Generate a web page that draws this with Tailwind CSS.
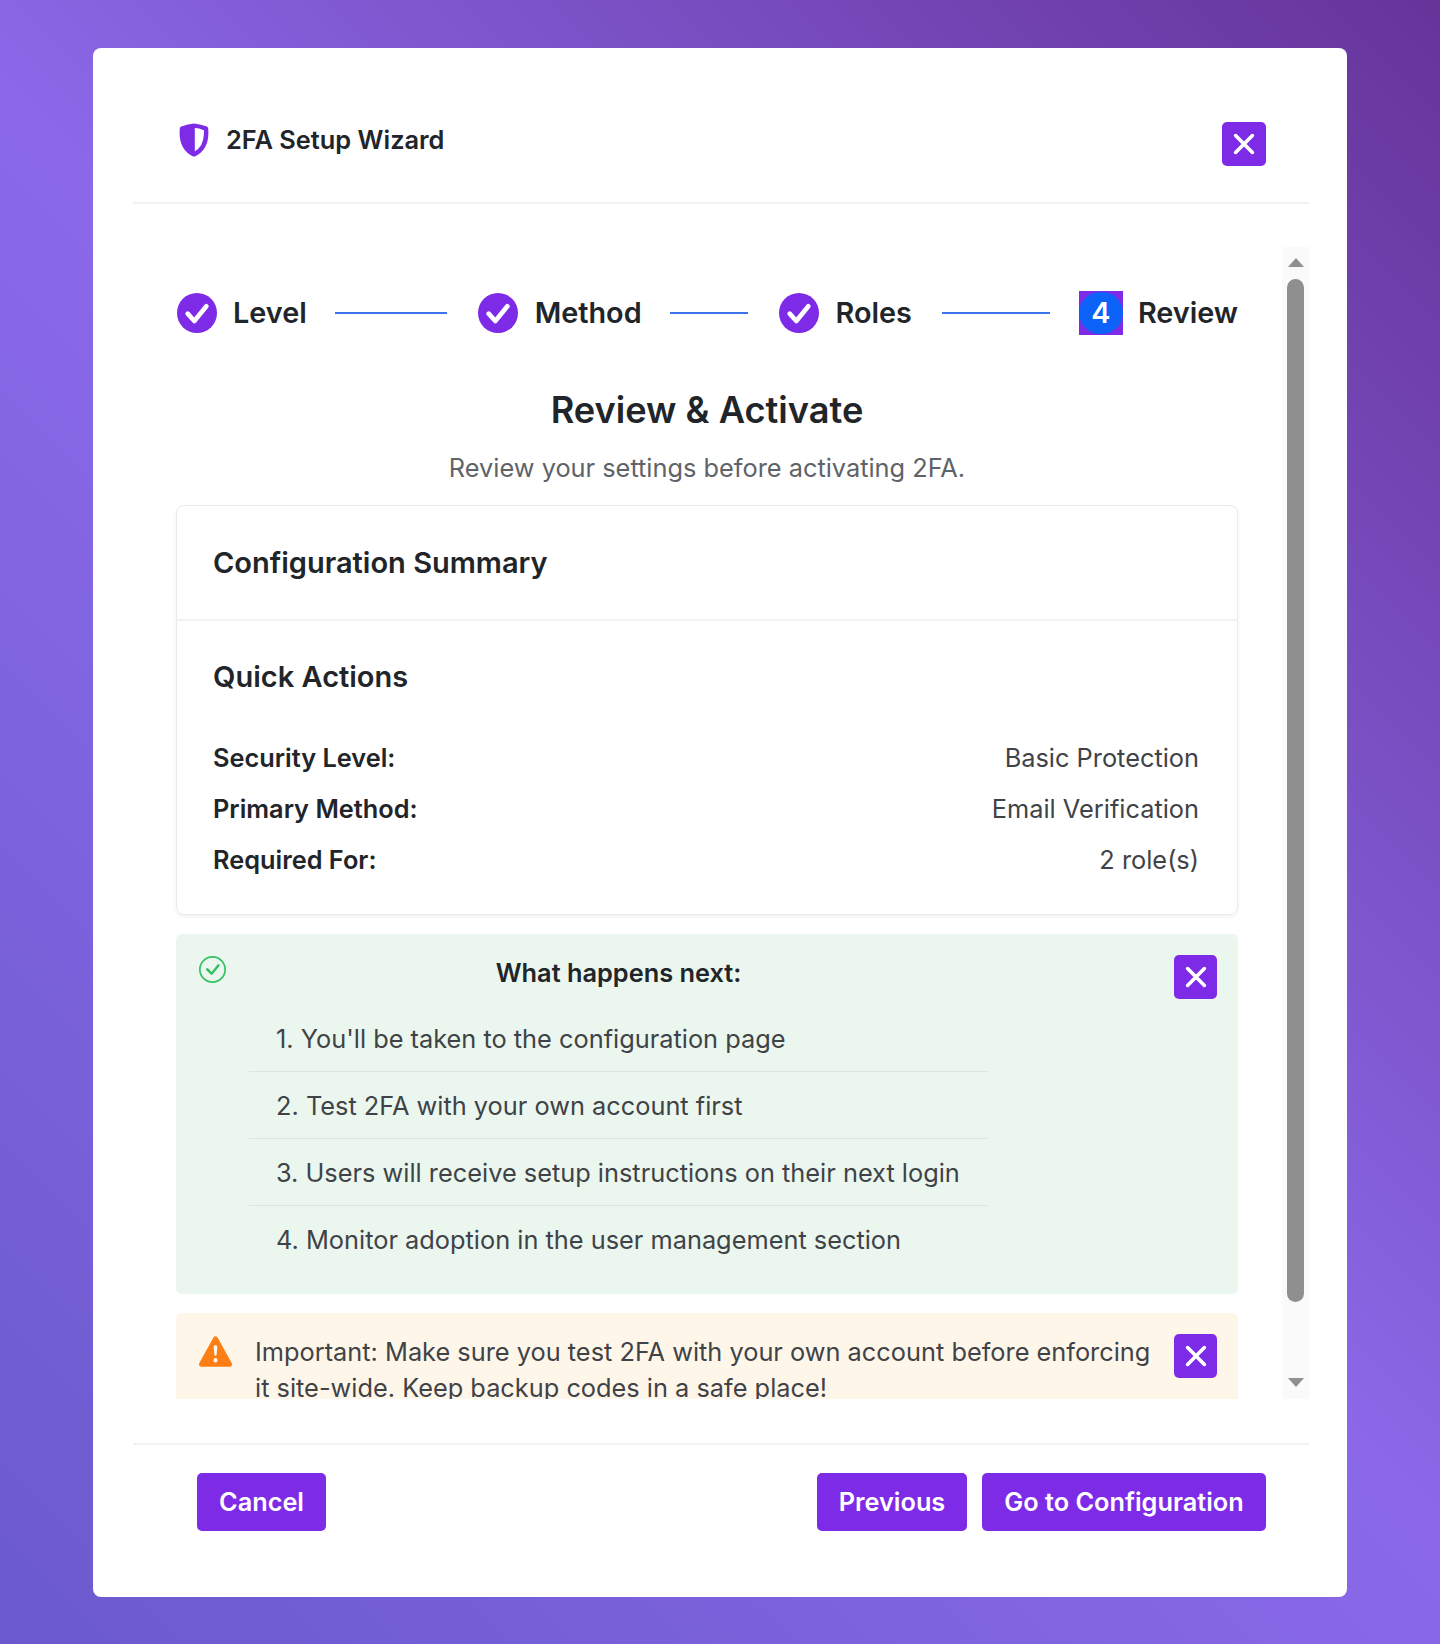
<!DOCTYPE html>
<html lang="en">
<head>
    <meta charset="UTF-8">
    <meta name="viewport" content="width=device-width, initial-scale=1.0">
    <title>2FA Setup Wizard</title>
    <script src="https://cdn.jsdelivr.net/npm/@tailwindcss/browser@4"></script>
</head>
<body class="h-[1644px] overflow-hidden font-['Inter',sans-serif] text-[#212529] bg-[linear-gradient(45deg,#6a5acd_0%,#8b69e9_50%,#663399_100%)]">

<div class="pt-[48px] w-[1254px] ml-[93px]">
    <div class="h-[1549px] bg-white rounded-[8px] pl-[40px] pr-[38px] flex flex-col">

        <!-- Header -->
        <div class="h-[156px] shrink-0 border-b-2 border-[#f1f2f3] flex items-start justify-between pl-[45px] pr-[43px] pt-[74px]">
            <div class="flex items-center gap-[16px]">
                <svg class="w-[32px] h-[34px]" viewBox="0 0 16 17" fill="none">
                    <path d="M8 1.300C6.200 1.400 3.800 2.100 2 2.800 1.500 8.500 2.800 13.300 8 15.700 13.200 13.300 14.500 8.500 14 2.800 12.200 2.100 9.800 1.400 8 1.300Z" stroke="#7e2be8" stroke-width="2.200" stroke-linejoin="round"/>
                    <path d="M8.400 1C6.200 1.100 3.400 1.900 1.800 2.600 1.200 8.500 2.600 13.600 8.400 16Z" fill="#7e2be8"/>
                </svg>
                <span class="text-[25.400px] leading-[36px] font-semibold">2FA Setup Wizard</span>
            </div>
            <button class="w-[44px] h-[44px] rounded-[5px] bg-[#7e2be8] flex items-center justify-center">
                <svg class="w-[24px] h-[24px]" viewBox="0 0 20 20" fill="none" stroke="#fff" stroke-width="3" stroke-linecap="round"><path d="M3 3l14 14M17 3L3 17"/></svg>
            </button>
        </div>

        <!-- Scroll area -->
        <div class="mt-[43px] h-[1152px] shrink-0 flex">
            <div class="w-[1149px] overflow-hidden pl-[43px] pr-[44px]">

                <!-- Steps -->
                <div class="mt-[44px] h-[44px] flex items-center text-[28.800px] font-semibold">
                    <div class="w-[40px] h-[40px] ml-[1px] rounded-full bg-[#7e2be8] flex items-center justify-center">
                        <svg class="w-[32px] h-[32px]" viewBox="0 0 24 24" fill="none" stroke="#fff" stroke-width="3.500" stroke-linecap="round" stroke-linejoin="round"><path d="M5 12.500l5 5.500 9-11"/></svg>
                    </div>
                    <span class="ml-[16px]">Level</span>
                    <div class="ml-[28px] w-[112px] h-[2px] bg-[#3b72ee]"></div>
                    <div class="ml-[31px] w-[40px] h-[40px] rounded-full bg-[#7e2be8] flex items-center justify-center">
                        <svg class="w-[32px] h-[32px]" viewBox="0 0 24 24" fill="none" stroke="#fff" stroke-width="3.500" stroke-linecap="round" stroke-linejoin="round"><path d="M5 12.500l5 5.500 9-11"/></svg>
                    </div>
                    <span class="ml-[17px]">Method</span>
                    <div class="ml-[28px] w-[78px] h-[2px] bg-[#3b72ee]"></div>
                    <div class="ml-[31px] w-[40px] h-[40px] rounded-full bg-[#7e2be8] flex items-center justify-center">
                        <svg class="w-[32px] h-[32px]" viewBox="0 0 24 24" fill="none" stroke="#fff" stroke-width="3.500" stroke-linecap="round" stroke-linejoin="round"><path d="M5 12.500l5 5.500 9-11"/></svg>
                    </div>
                    <span class="ml-[17px]">Roles</span>
                    <div class="ml-[30px] w-[108px] h-[2px] bg-[#3b72ee]"></div>
                    <div class="ml-[29px] w-[44px] h-[44px] bg-[#7e2be8] flex items-center justify-center">
                        <div class="w-[44px] h-[42px] rounded-full bg-[#0d62f7] text-white flex items-center justify-center">4</div>
                    </div>
                    <span class="ml-[15px]">Review</span>
                </div>

                <h2 class="mt-[51px] text-center text-[36.200px] leading-[48px] font-semibold">Review &amp; Activate</h2>
                <p class="mt-[16px] text-center text-[25.350px] leading-[36px] text-[#5f6368]">Review your settings before activating 2FA.</p>

                <!-- Summary card -->
                <div class="mt-[19px] h-[410px] border border-[#e9ebed] rounded-[8px] shadow-[0_2px_4px_rgba(0,0,0,0.06)]">
                    <div class="h-[115px] border-b-2 border-[#f1f2f3] px-[36px] flex items-center">
                        <h3 class="text-[29px] leading-[40px] font-semibold">Configuration Summary</h3>
                    </div>
                    <div class="pl-[36px] pr-[38px]">
                        <h4 class="mt-[36px] text-[29px] leading-[40px] font-semibold">Quick Actions</h4>
                        <div class="mt-[35px] flex flex-col text-[25.350px] leading-[51px]">
                            <div class="flex justify-between"><span class="font-semibold">Security Level:</span><span class="text-[#3f4347]">Basic Protection</span></div>
                            <div class="flex justify-between"><span class="font-semibold">Primary Method:</span><span class="text-[#3f4347]">Email Verification</span></div>
                            <div class="flex justify-between"><span class="font-semibold">Required For:</span><span class="text-[#3f4347]">2 role(s)</span></div>
                        </div>
                    </div>
                </div>

                <!-- What happens next -->
                <div class="mt-[19px] h-[360px] rounded-[6px] bg-[#ebf6ee] flex items-start pl-[23px] pr-[21px]">
                    <svg class="w-[27px] h-[27px] mt-[22px] shrink-0" viewBox="0 0 16 16" fill="#34c060">
                        <path d="M8 15A7 7 0 1 1 8 1a7 7 0 0 1 0 14zm0 1A8 8 0 1 0 8 0a8 8 0 0 0 0 16z"/>
                        <path d="M10.970 4.970a.235.235 0 0 0-.02.022L7.477 9.417 5.384 7.323a.75.75 0 0 0-1.060 1.060L6.970 11.030a.75.75 0 0 0 1.079-.02l3.992-4.990a.75.75 0 0 0-1.071-1.050z"/>
                    </svg>
                    <div class="ml-[23px] w-[739px] shrink-0">
                        <div class="mt-[21px] text-center text-[25.350px] leading-[36px] font-semibold">What happens next:</div>
                        <ol class="mt-[14px] text-[25.350px] leading-[36px] text-[#3f4347]">
                            <li class="h-[67px] pl-[27px] pt-[16px] border-b border-[#dce5df]">1. You'll be taken to the configuration page</li>
                            <li class="h-[67px] pl-[27px] pt-[16px] border-b border-[#dce5df]">2. Test 2FA with your own account first</li>
                            <li class="h-[67px] pl-[27px] pt-[16px] border-b border-[#dce5df]">3. Users will receive setup instructions on their next login</li>
                            <li class="h-[67px] pl-[27px] pt-[16px]">4. Monitor adoption in the user management section</li>
                        </ol>
                    </div>
                    <button class="ml-auto mt-[21px] w-[43px] h-[44px] rounded-[5px] bg-[#7e2be8] flex items-center justify-center">
                        <svg class="w-[24px] h-[24px]" viewBox="0 0 20 20" fill="none" stroke="#fff" stroke-width="3" stroke-linecap="round"><path d="M3 3l14 14M17 3L3 17"/></svg>
                    </button>
                </div>

                <!-- Warning -->
                <div class="mt-[19px] h-[200px] rounded-[6px] bg-[#fff6ea] flex items-start pl-[23px] pr-[21px]">
                    <svg class="w-[33px] h-[35px] mt-[21px] shrink-0" viewBox="0 0 16 16" preserveAspectRatio="none" fill="#fd7e14">
                        <path d="M8.982 1.566a1.130 1.130 0 0 0-1.960 0L.165 13.233c-.457.778.091 1.767.98 1.767h13.713c.889 0 1.438-.99.98-1.767L8.982 1.566zM8 5c.535 0 .954.462.9.995l-.35 3.507a.552.552 0 0 1-1.100 0L7.100 5.995A.905.905 0 0 1 8 5zm.002 6a1 1 0 1 1 0 2 1 1 0 0 1 0-2z"/>
                    </svg>
                    <p class="ml-[23px] mt-[21px] text-[25.350px] leading-[36px] text-[#3f4347] w-[900px] shrink-0">Important: Make sure you test 2FA with your own account before enforcing it site-wide. Keep backup codes in a safe place!</p>
                    <button class="ml-auto mt-[21px] w-[43px] h-[44px] rounded-[5px] bg-[#7e2be8] flex items-center justify-center">
                        <svg class="w-[24px] h-[24px]" viewBox="0 0 20 20" fill="none" stroke="#fff" stroke-width="3" stroke-linecap="round"><path d="M3 3l14 14M17 3L3 17"/></svg>
                    </button>
                </div>
            </div>

            <!-- Scrollbar -->
            <div class="w-[27px] bg-[#fafafa] flex flex-col items-center pt-[11px]">
                <div class="w-0 h-0 border-x-[8px] border-x-transparent border-b-[9px] border-b-[#8f8f8f]"></div>
                <div class="mt-[12px] w-[17px] h-[1023px] rounded-full bg-[#8f8f8f]"></div>
                <div class="mt-[76px] w-0 h-0 border-x-[8px] border-x-transparent border-t-[9px] border-t-[#8f8f8f]"></div>
            </div>
        </div>

        <!-- Footer -->
        <div class="mt-[44px] border-t-2 border-[#f1f2f3] pt-[28px] pl-[64px] pr-[43px] flex text-[25.300px] leading-[36px] font-semibold text-white">
            <button class="h-[58px] w-[129px] rounded-[5px] bg-[#7e2be8]">Cancel</button>
            <button class="ml-auto h-[58px] w-[150px] rounded-[5px] bg-[#7e2be8]">Previous</button>
            <button class="ml-[15px] h-[58px] w-[284px] rounded-[5px] bg-[#7e2be8]">Go to Configuration</button>
        </div>
    </div>
</div>

</body>
</html>
